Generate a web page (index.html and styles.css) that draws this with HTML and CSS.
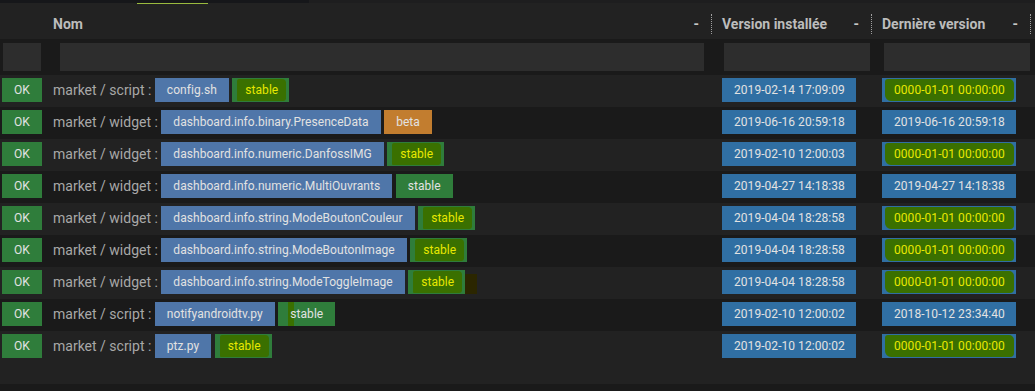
FILE: index.html
```html
<!DOCTYPE html>
<html lang="fr">
<head>
<meta charset="utf-8">
<title>Mises à jour</title>
<link rel="stylesheet" href="styles.css">
</head>
<body>
<div class="topbar">
  <div class="tabs"><span class="tab-active"></span></div>
  <div class="topbar-rest"></div>
</div>
<div class="table">
  <div class="grid head">
    <div class="hc"></div>
    <div class="hc sep"><span>Nom</span><span class="dash">-</span></div>
    <div class="hc sep hc3"><span>Version installée</span><span class="dash">-</span></div>
    <div class="hc sep hc4"><span>Dernière version</span><span class="dash">-</span></div>
    <div class="hc"></div>
  </div>
  <div class="grid filters">
    <div class="fc fc1"><div class="input"></div></div>
    <div class="fc fc2"><div class="input"></div></div>
    <div class="fc fc3"><div class="input"></div></div>
    <div class="fc fc4"><div class="input"></div></div>
    <div class="fc"></div>
  </div>

  <div class="grid row odd">
    <div class="c1"><span class="lbl ok">OK</span></div>
    <div class="c2">market / script : <span class="lbl name">config.sh</span> <span class="lbl stable hl"><span class="mark">stable</span></span></div>
    <div class="c3"><span class="lbl date">2019-02-14 17:09:09</span></div>
    <div class="c4"><span class="lbl date hl"><span class="mark">0000-01-01 00:00:00</span></span></div>
    <div></div>
  </div>
  <div class="grid row even">
    <div class="c1"><span class="lbl ok">OK</span></div>
    <div class="c2">market / widget : <span class="lbl name">dashboard.info.binary.PresenceData</span> <span class="lbl beta">beta</span></div>
    <div class="c3"><span class="lbl date">2019-06-16 20:59:18</span></div>
    <div class="c4"><span class="lbl date">2019-06-16 20:59:18</span></div>
    <div></div>
  </div>
  <div class="grid row odd">
    <div class="c1"><span class="lbl ok">OK</span></div>
    <div class="c2">market / widget : <span class="lbl name">dashboard.info.numeric.DanfossIMG</span> <span class="lbl stable hl"><span class="mark">stable</span></span></div>
    <div class="c3"><span class="lbl date">2019-02-10 12:00:03</span></div>
    <div class="c4"><span class="lbl date hl"><span class="mark">0000-01-01 00:00:00</span></span></div>
    <div></div>
  </div>
  <div class="grid row even">
    <div class="c1"><span class="lbl ok">OK</span></div>
    <div class="c2">market / widget : <span class="lbl name">dashboard.info.numeric.MultiOuvrants</span> <span class="lbl stable">stable</span></div>
    <div class="c3"><span class="lbl date">2019-04-27 14:18:38</span></div>
    <div class="c4"><span class="lbl date">2019-04-27 14:18:38</span></div>
    <div></div>
  </div>
  <div class="grid row odd">
    <div class="c1"><span class="lbl ok">OK</span></div>
    <div class="c2">market / widget : <span class="lbl name">dashboard.info.string.ModeBoutonCouleur</span> <span class="lbl stable hl"><span class="mark">stable</span></span></div>
    <div class="c3"><span class="lbl date">2019-04-04 18:28:58</span></div>
    <div class="c4"><span class="lbl date hl"><span class="mark">0000-01-01 00:00:00</span></span></div>
    <div></div>
  </div>
  <div class="grid row even">
    <div class="c1"><span class="lbl ok">OK</span></div>
    <div class="c2">market / widget : <span class="lbl name">dashboard.info.string.ModeBoutonImage</span> <span class="lbl stable hl"><span class="mark">stable</span></span></div>
    <div class="c3"><span class="lbl date">2019-04-04 18:28:58</span></div>
    <div class="c4"><span class="lbl date hl"><span class="mark">0000-01-01 00:00:00</span></span></div>
    <div></div>
  </div>
  <div class="grid row odd">
    <div class="c1"><span class="lbl ok">OK</span></div>
    <div class="c2">market / widget : <span class="lbl name">dashboard.info.string.ModeToggleImage</span> <span class="lbl stable hl over"><span class="mark">stable</span></span></div>
    <div class="c3"><span class="lbl date">2019-04-04 18:28:58</span></div>
    <div class="c4"><span class="lbl date hl"><span class="mark">0000-01-01 00:00:00</span></span></div>
    <div></div>
  </div>
  <div class="grid row even">
    <div class="c1"><span class="lbl ok">OK</span></div>
    <div class="c2">market / script : <span class="lbl name">notifyandroidtv.py</span> <span class="lbl stable dot">stable</span></div>
    <div class="c3"><span class="lbl date">2019-02-10 12:00:02</span></div>
    <div class="c4"><span class="lbl date">2018-10-12 23:34:40</span></div>
    <div></div>
  </div>
  <div class="grid row odd">
    <div class="c1"><span class="lbl ok">OK</span></div>
    <div class="c2">market / script : <span class="lbl name">ptz.py</span> <span class="lbl stable hl"><span class="mark">stable</span></span></div>
    <div class="c3"><span class="lbl date">2019-02-10 12:00:02</span></div>
    <div class="c4"><span class="lbl date hl"><span class="mark">0000-01-01 00:00:00</span></span></div>
    <div></div>
  </div>
  <div class="table-foot"></div>
</div>
</body>
</html>
```

FILE: styles.css
```css
html, body {
  margin: 0;
  padding: 0;
}
body {
  background: #1a1a1a;
  font-family: Roboto, "Liberation Sans", Arial, sans-serif;
  color: #a9a9a9;
  width: 1035px;
  height: 391px;
  overflow: hidden;
}

.topbar {
  display: flex;
  height: 4px;
  background: #222222;
}
.tabs {
  width: 309px;
  height: 3px;
  background: #16171a;
}
.tab-active {
  display: block;
  margin-left: 137px;
  width: 71px;
  height: 1px;
  margin-top: 3px;
  background: #9aba3e;
}
.topbar-rest {
  flex: 1;
  height: 3px;
  background: #1e1e1f;
}

.grid {
  display: grid;
  grid-template-columns: 45px 667px 160px 159px 4px;
}

.head {
  background: #222222;
  padding: 10px 0 5px;
}
.hc {
  height: 20px;
  display: flex;
  align-items: center;
  justify-content: space-between;
  font-size: 14px;
  font-weight: bold;
  color: #bcbcbc;
}
.hc.sep {
  border-right: 1px dotted #a0a0a0;
  padding: 0 12px 0 8px;
}
.hc.hc3, .hc.hc4 {
  padding-left: 10px;
}
.hc .dash {
  color: #c8c8c8;
}

.filters {
  background: #1a1a1a;
  padding: 4px 0;
}
.fc .input {
  height: 28px;
  background: #2d2d2d;
}
.fc1 { padding: 0 4px 0 3px; }
.fc2 { padding: 0 8px 0 15px; }
.fc3 { padding: 0 2px 0 12px; }
.fc4 { padding: 0 1px 0 12px; }

.row {
  height: 32px;
  box-sizing: border-box;
  padding-top: 3px;
  font-size: 14px;
  line-height: 24px;
  white-space: nowrap;
}
.row.odd { background: #222222; }
.row.even { background: #1a1a1a; }

.c1 { padding-left: 2px; }
.c2 { padding-left: 8px; color: #a8a8a8; }
.c3, .c4 { padding-left: 10px; }

.lbl {
  display: inline-block;
  height: 24px;
  line-height: 24px;
  padding: 0 12px;
  font-size: 12px;
  letter-spacing: 0.05px;
  color: #e2e2e2;
  vertical-align: top;
}
.ok { background: #2f7d3b; width: 16px; text-align: center; }
.name { background: #4f76a9; }
.stable { background: #2f7d3b; }
.beta { background: #c27d2f; }
.date {
  background: #306fa3;
  width: 110px;
  text-align: center;
}

.hl .mark {
  display: inline-block;
  line-height: 22px;
  margin-top: 1px;
  background: #3a7000;
  color: #e8e800;
}
.stable.hl .mark {
  padding: 0 8px;
  margin-left: -7px;
  margin-right: -9px;
  border-radius: 2px 4px 3px 1px;
}
.date.hl .mark {
  padding: 0 9px;
  margin-left: -9px;
  margin-right: -9px;
  border-radius: 3px 5px 4px 6px;
}
.stable.over {
  box-shadow: 14px 2px 0 -2px #2b2600;
}
.stable.dot {
  background: linear-gradient(to right, #2f7d3b 0, #2f7d3b 10px, #3a7000 10px, #3a7000 16px, #2f7d3b 16px);
}

.table-foot {
  height: 21px;
  background: #222222;
}
```
